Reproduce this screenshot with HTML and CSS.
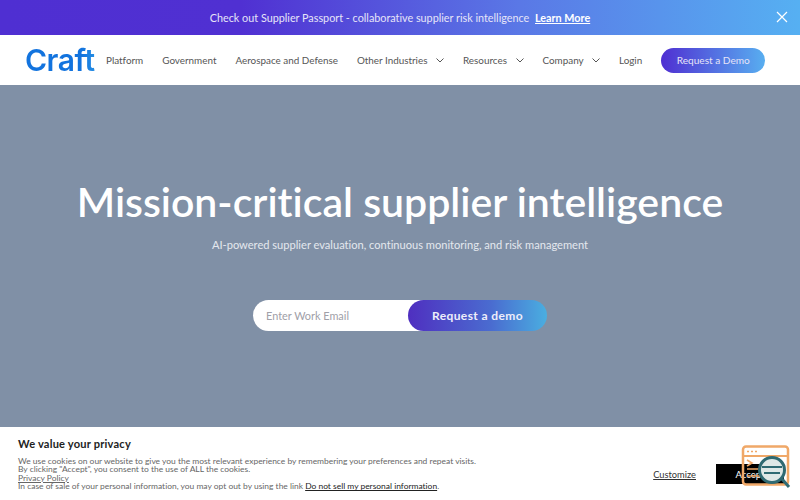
FILE: index.html
```html
<!DOCTYPE html>
<html lang="en">
<head>
<meta charset="UTF-8">
<meta name="viewport" content="width=device-width, initial-scale=1.0">
<title>Craft</title>
<link rel="stylesheet" href="styles.css">
</head>
<body>
<div class="top-banner">
    <p>Check out Supplier Passport - collaborative supplier risk intelligence <a href="#">Learn More</a></p>
    <svg class="banner-close" width="12" height="12" viewBox="0 0 12 12"><path d="M1 1l10 10M11 1L1 11" stroke="#fff" stroke-width="1.2" fill="none"/></svg>
</div>

<nav class="nav">
    <a class="logo" href="#">Craft</a>
    <div class="nav-links">
        <a href="#">Platform</a>
        <a href="#">Government</a>
        <a href="#">Aerospace and Defense</a>
        <a href="#" class="has-menu">Other Industries <svg width="8" height="5" viewBox="0 0 8 5"><path d="M.5.5L4 4 7.500.5" stroke="#555" fill="none"/></svg></a>
        <a href="#" class="has-menu">Resources <svg width="8" height="5" viewBox="0 0 8 5"><path d="M.5.5L4 4 7.500.5" stroke="#555" fill="none"/></svg></a>
        <a href="#" class="has-menu">Company <svg width="8" height="5" viewBox="0 0 8 5"><path d="M.5.5L4 4 7.500.5" stroke="#555" fill="none"/></svg></a>
        <a href="#">Login</a>
    </div>
    <a class="nav-btn" href="#">Request a Demo</a>
</nav>

<section class="hero">
    <h1>Mission-critical supplier intelligence</h1>
    <p>AI-powered supplier evaluation, continuous monitoring, and risk management</p>
    <form class="demo-form">
        <input type="text" placeholder="Enter Work Email">
        <button type="button">Request a demo</button>
    </form>
</section>

<!-- cookie notice -->
<div class="cookie-bar">
    <div class="cookie-text">
        <h4>We value your privacy</h4>
        <p>We use cookies on our website to give you the most relevant experience by remembering your preferences and repeat visits.</p>
        <p>By clicking "Accept", you consent to the use of ALL the cookies.</p>
        <p><a href="#">Privacy Policy</a></p>
        <p>In case of sale of your personal information, you may opt out by using the link <a class="dark-link" href="#">Do not sell my personal information</a>.</p>
    </div>
    <div class="cookie-actions">
        <a href="#">Customize</a>
        <button type="button">Accept</button>
    </div>
</div>

<!-- floating widget -->
<svg class="float-icon" width="50" height="44" viewBox="0 0 50 44">
    <rect x="2" y="1.500" width="45" height="38" rx="3" fill="none" stroke="#f0a868" stroke-width="2.500"/>
    <path d="M2 11h45" stroke="#f0a868" stroke-width="2"/>
    <path d="M6 6.500h2M10 6.500h2M14 6.500h2" stroke="#f0a868" stroke-width="1.500"/>
    <path d="M6 15l5 3-5 3M6 24h20M6 31h14" stroke="#f0a868" stroke-width="1.600" fill="none"/>
    <circle cx="31" cy="25" r="12.500" fill="#dfe8e6" stroke="#2f6a72" stroke-width="3"/>
    <path d="M21 22h20M23 28h16" stroke="#2f6a72" stroke-width="2"/>
    <path d="M41 34l7 8" stroke="#2f6a72" stroke-width="3"/>
</svg>
</body>
</html>
```

FILE: styles.css
```css
* {
    box-sizing: border-box;
}
body {
    margin: 0;
    height: 500px;
    overflow: hidden;
    font-family: Lato, "Liberation Sans", sans-serif;
    font-variant-ligatures: none;
    background-color: #8090a6;
}
a {
    color: inherit;
}
.top-banner {
    position: relative;
    height: 35px;
    display: flex;
    justify-content: center;
    align-items: center;
    background: linear-gradient(90deg, #4f2fd2 0%, #5030d2 30%, #5a78e6 65%, #56b0f2 100%);
    color: #e6e4f8;
    font-size: 10.800px;
}
.top-banner p {
    margin: 0;
}
.top-banner a {
    margin-left: 3px;
    color: white;
    font-weight: bold;
}
.banner-close {
    position: absolute;
    right: 12px;
    top: 11px;
}
.nav {
    height: 50px;
    padding-left: 25px;
    display: flex;
    align-items: center;
    background-color: white;
}
.logo {
    width: 81px;
    font-family: Inter, sans-serif;
    font-size: 30px;
    font-weight: 600;
    letter-spacing: -0.5px;
    text-decoration: none;
    color: transparent;
    background: linear-gradient(90deg, #1273de 70%, #35a5ea 100%);
    background-clip: text;
    -webkit-background-clip: text;
}
.nav-links {
    display: flex;
    gap: 19px;
    font-size: 9.900px;
    color: #555;
    white-space: nowrap;
}
.nav-links a {
    text-decoration: none;
}
.has-menu svg {
    margin-left: 6px;
    vertical-align: 1px;
}
.nav-btn {
    width: 104px;
    height: 25px;
    margin-left: 19px;
    line-height: 25px;
    text-align: center;
    border-radius: 13px;
    font-size: 10.100px;
    color: #e6e4f8;
    text-decoration: none;
    background: linear-gradient(90deg, #4f2fd2, #58aef0);
}
.hero {
    height: 342px;
    padding-top: 87px;
    text-align: center;
    color: white;
}
.hero h1 {
    margin: 0;
    font-size: 41px;
    line-height: 60px;
    font-weight: 600;
}
.hero p {
    margin: 6px 0 0;
    font-size: 11.100px;
    color: #e4e8ee;
}
.demo-form {
    display: flex;
    justify-content: center;
    margin-top: 49px;
}
.demo-form input {
    width: 180px;
    height: 31px;
    padding-left: 13px;
    border: none;
    outline: none;
    border-radius: 16px 0 0 16px;
    font-family: inherit;
    font-size: 10.900px;
    background-color: white;
}
.demo-form input::placeholder {
    color: #a0a0a8;
}
.demo-form button {
    width: 139px;
    height: 31px;
    margin-left: -25px;
    padding-bottom: 2px;
    border: none;
    border-radius: 16px;
    font-family: inherit;
    font-size: 12px;
    font-weight: bold;
    letter-spacing: 0.4px;
    color: #eeeefa;
    background: linear-gradient(90deg, #4f2fc0, #4a6cd0 60%, #4aaee0);
}
.cookie-bar {
    position: fixed;
    left: 0;
    right: 0;
    bottom: 0;
    height: 73px;
    padding: 9px 16px 0 18px;
    display: flex;
    justify-content: space-between;
    background-color: white;
}
.cookie-text h4 {
    margin: 0 0 6px;
    font-size: 11.100px;
    line-height: 15px;
    letter-spacing: 0.2px;
    color: #222;
}
.cookie-text p {
    margin: 0;
    font-size: 8.450px;
    line-height: 8.400px;
    color: #666;
}
.dark-link {
    color: #222;
}
.cookie-actions {
    display: flex;
    align-items: center;
    align-self: flex-start;
    gap: 20px;
    margin-top: 28px;
    font-size: 9.300px;
    color: #333;
}
.cookie-actions button {
    width: 68px;
    height: 20px;
    padding: 0;
    border: none;
    font-family: inherit;
    font-size: 9.500px;
    color: white;
    background-color: black;
}
.float-icon {
    position: fixed;
    right: 9px;
    bottom: 11px;
}
```
